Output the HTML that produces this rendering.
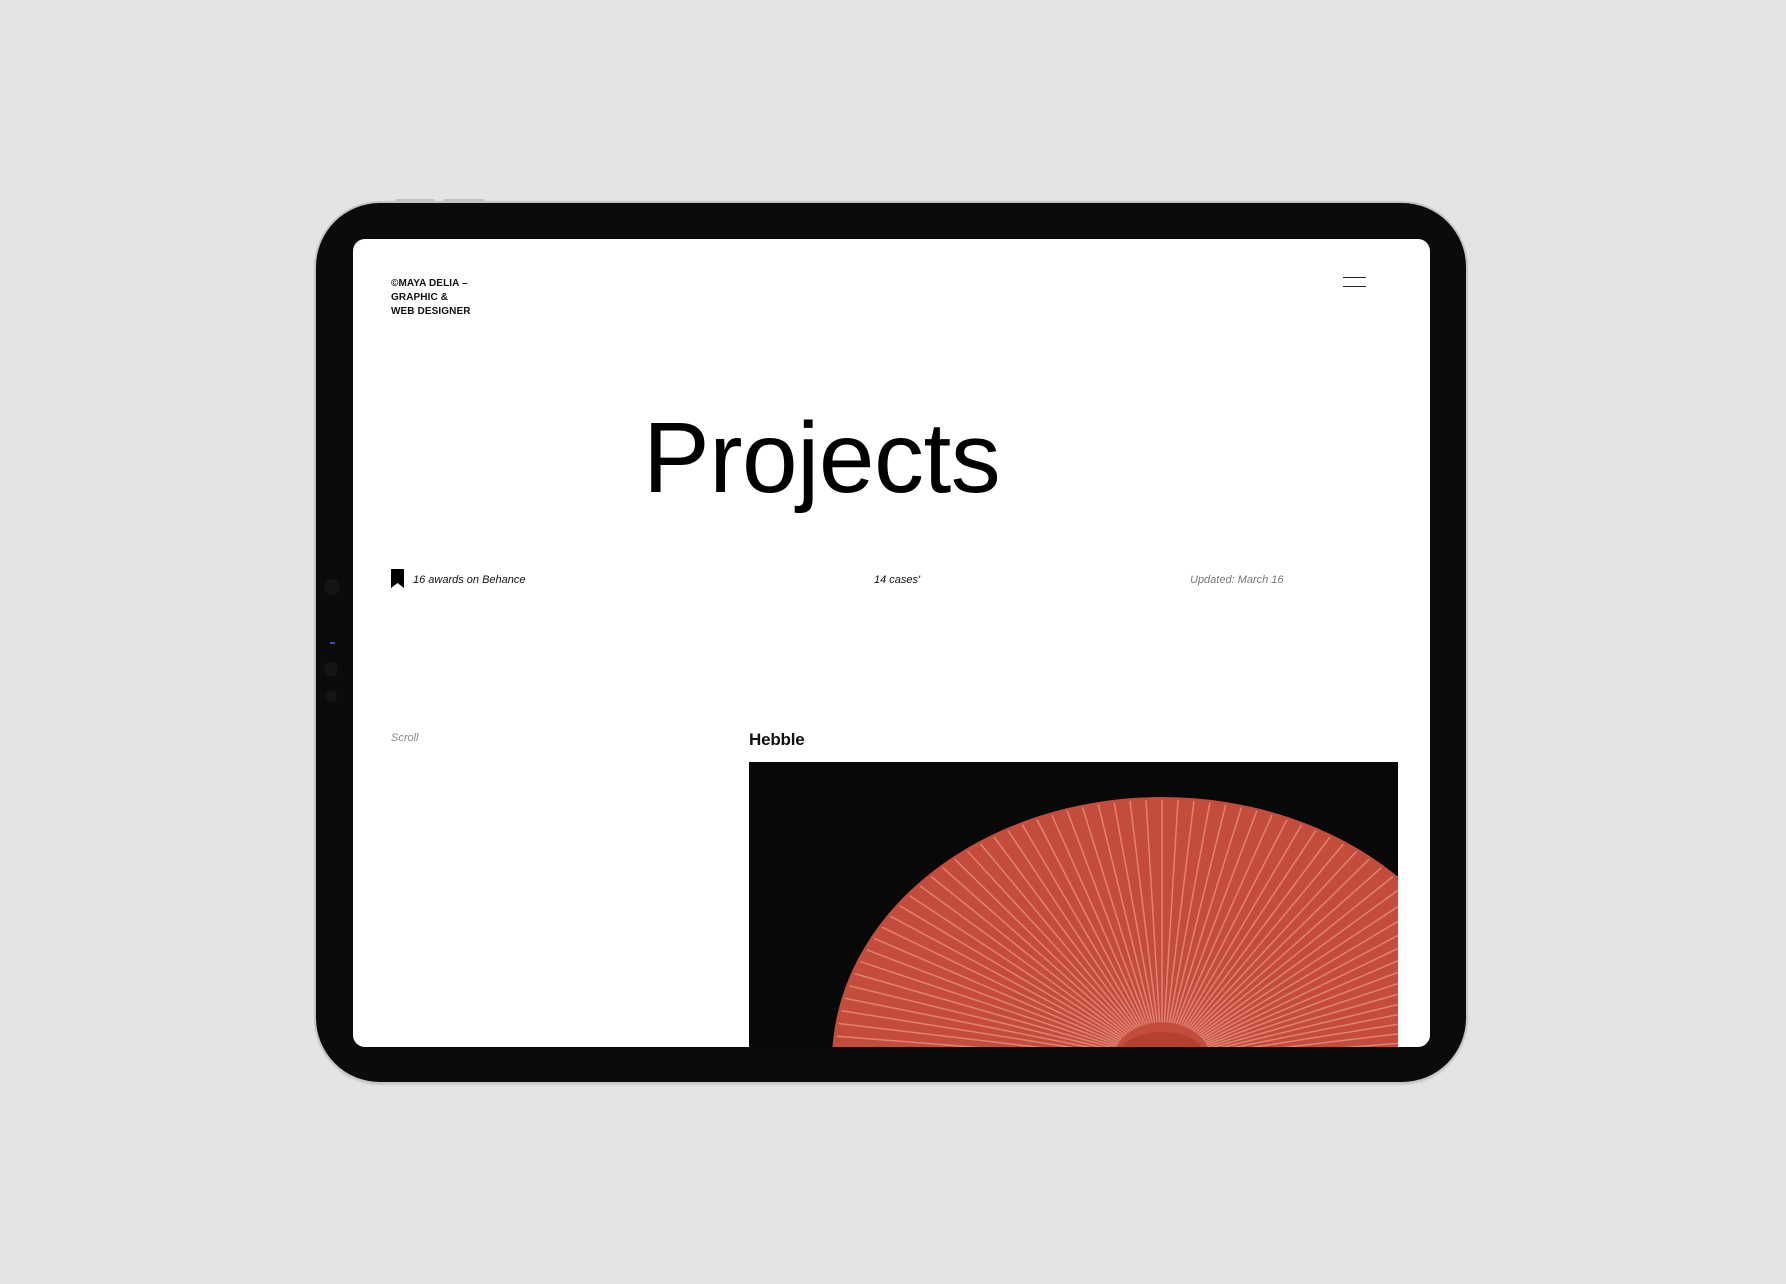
<!DOCTYPE html>
<html><head><meta charset="utf-8"><style>
*{margin:0;padding:0;box-sizing:border-box}
body{width:1786px;height:1284px;background:#e3e4e6;position:relative;overflow:hidden;font-family:"Liberation Sans",Arial,sans-serif}
.dev{position:absolute;left:316px;top:203px;width:1150px;height:879px;border-radius:64px;background:#0b0b0b;box-shadow:0 0 0 2px #c4c5c7,0 2px 3px rgba(0,0,0,.2)}
.screen{position:absolute;left:353px;top:239px;width:1077px;height:808px;border-radius:12px;background:#fff;overflow:hidden}
.abs{position:absolute}
.dot{position:absolute;border-radius:50%;background:#151515}
</style></head><body>
<div class="abs" style="left:395px;top:199px;width:40px;height:3px;background:#c4c5c7;border-radius:2px"></div>
<div class="abs" style="left:443px;top:199px;width:42px;height:3px;background:#c4c5c7;border-radius:2px"></div>
<div class="dev"></div>
<div class="dot" style="left:324px;top:579px;width:16px;height:16px"></div>
<div class="dot" style="left:324px;top:662px;width:14px;height:14px"></div>
<div class="dot" style="left:325px;top:690px;width:12px;height:12px"></div>
<div class="abs" style="left:330px;top:642px;width:5px;height:2px;background:#2f5aa8"></div>
<div class="screen">
 <div class="abs" style="left:38px;top:38px;font-size:10px;line-height:14px;color:#111;font-weight:bold;letter-spacing:.1px">©MAYA DELIA –<br>GRAPHIC &amp;<br>WEB DESIGNER</div>
 <div class="abs" style="left:990px;top:38px;width:23px;height:1px;background:#222"></div>
 <div class="abs" style="left:990px;top:47px;width:23px;height:1px;background:#222"></div>
 <div class="abs" style="left:290px;top:159px;font-size:100px;line-height:120px;letter-spacing:-0.5px;color:#000">Projects</div>
 <svg class="abs" style="left:38px;top:330px" width="13" height="19" viewBox="0 0 13 19"><path d="M0 0H13V19L6.5 14L0 19Z" fill="#000"/></svg>
 <div class="abs" style="left:60px;top:335px;font-size:11px;font-style:italic;color:#111">16 awards on Behance</div>
 <div class="abs" style="left:521px;top:335px;font-size:11px;font-style:italic;color:#111">14 cases'</div>
 <div class="abs" style="left:837px;top:335px;font-size:11px;font-style:italic;color:#777">Updated: March 16</div>
 <div class="abs" style="left:38px;top:493px;font-size:11px;font-style:italic;color:#888">Scroll</div>
 <div class="abs" style="left:396px;top:491px;font-size:17px;font-weight:bold;color:#111;letter-spacing:-.2px">Hebble</div>
 <svg class="abs" id="img" style="left:396px;top:523px" width="649" height="285" viewBox="0 0 649 285">
  <rect width="649" height="285" fill="#070808"/>
  <g id="fan"></g>
 </svg>
</div>
<script>
var g=document.getElementById('fan'),s='';
var cx=413,cy=300,rx=330,ry=265;
s+='<ellipse cx="'+cx+'" cy="'+cy+'" rx="'+rx+'" ry="'+ry+'" fill="#c44c3d"/>';
for(var i=0;i<=64;i++){var a=Math.PI*(i/64);var c=Math.cos(a),sn=Math.sin(a);
 var x1=cx-c*rx*0.15,y1=cy-sn*ry*0.15,x=cx-c*rx*0.99,y=cy-sn*ry*0.99;
 s+='<line x1="'+x1.toFixed(1)+'" y1="'+y1.toFixed(1)+'" x2="'+x.toFixed(1)+'" y2="'+y.toFixed(1)+'" stroke="#eb9585" stroke-width="1.5" opacity=".75"/>';}
s+='<ellipse cx="'+cx+'" cy="'+(cy-8)+'" rx="42" ry="22" fill="#b5402f"/>';
g.innerHTML=s;
</script>
</body></html>
